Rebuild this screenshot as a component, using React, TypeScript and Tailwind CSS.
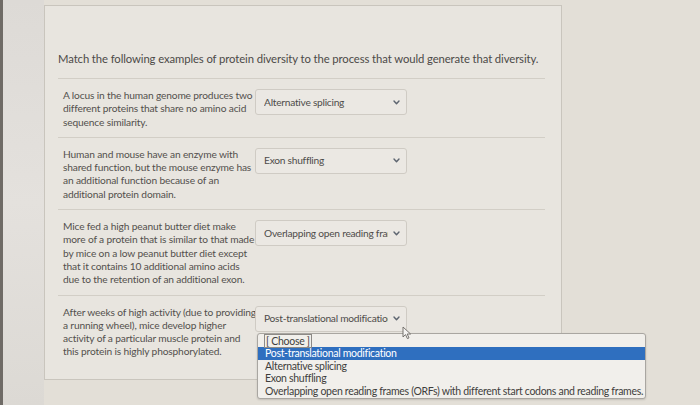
import React from "react";

const rows: { lines: string[]; value: string }[] = [
  {
    lines: [
      "A locus in the human genome produces two",
      "different proteins that share no amino acid",
      "sequence similarity.",
    ],
    value: "Alternative splicing",
  },
  {
    lines: [
      "Human and mouse have an enzyme with",
      "shared function, but the mouse enzyme has",
      "an additional function because of an",
      "additional protein domain.",
    ],
    value: "Exon shuffling",
  },
  {
    lines: [
      "Mice fed a high peanut butter diet make",
      "more of a protein that is similar to that made",
      "by mice on a low peanut butter diet except",
      "that it contains 10 additional amino acids",
      "due to the retention of an additional exon.",
    ],
    value: "Overlapping open reading frames (ORFs) with different start codons and reading frames.",
  },
  {
    lines: [
      "After weeks of high activity (due to providing",
      "a running wheel), mice develop higher",
      "activity of a particular muscle protein and",
      "this protein is highly phosphorylated.",
    ],
    value: "Post-translational modification",
  },
];

function Chevron() {
  return (
    <svg width="7" height="5" viewBox="0 0 7 5" className="shrink-0">
      <path d="M1 1 L3.5 3.8 L6 1" fill="none" stroke="#5d6570" strokeWidth="1.4" strokeLinecap="round" strokeLinejoin="round" />
    </svg>
  );
}

function SelectBox({ value }: { value: string }) {
  return (
    <div className="flex h-[26px] w-[152px] shrink-0 items-center rounded-[3px] border border-[#cfcbc4] bg-[#ebe8e3] pl-[8px] pr-[5px]">
      <span className="min-w-0 flex-1 overflow-hidden whitespace-nowrap text-[10.2px] leading-[13px] tracking-[-0.25px] text-[#4e4c4a]">
        {value}
      </span>
      <span className="ml-[3px] flex w-[10px] justify-center">
        <Chevron />
      </span>
    </div>
  );
}

export default function App() {
  return (
    <div
      className="relative flex h-[405px] w-[700px] overflow-hidden bg-[#e3dfd7]"
      style={{ fontFamily: "Lato, 'Open Sans', sans-serif" }}
    >
      <div className="w-[3px] shrink-0 bg-[#6f6b66]" />
      <div className="w-[41px] shrink-0 bg-gradient-to-b from-[#dddad6] via-[#e4e1dd] to-[#dcd9d4]" />
      <div className="mt-[5px] h-[375px] w-[518px] shrink-0 border border-[#c9c5bd] bg-[#e8e5df] pl-[13px] pr-[16px] pt-[46px]">
        <p className="whitespace-nowrap text-[11.3px] leading-[14px] tracking-[-0.1px] text-[#4c4a48]">
          Match the following examples of protein diversity to the process that would generate that diversity.
        </p>
        <div className="mt-[12px]">
          {rows.map((r, i) => (
            <div key={i} className="border-t border-[#d2cec6] pb-[8px] pt-[10px]">
              <div className="flex items-start">
                <div className="w-[197px] shrink-0 pl-[5px] text-[10.2px] leading-[13.3px] tracking-[-0.15px] text-[#53504d]">
                  {r.lines.map((l, j) => (
                    <div key={j} className="whitespace-nowrap">
                      {l}
                    </div>
                  ))}
                </div>
                <SelectBox value={r.value} />
              </div>
            </div>
          ))}
        </div>
      </div>

      {/* open native dropdown list */}
      <div className="absolute left-[257px] top-[333px] w-[389px] rounded-[3px] border border-[#a9a6a1] bg-[#f1efeb] pb-[1px] pt-[1px] text-[10.5px] leading-[12.4px] tracking-[-0.3px] text-[#3f3e3c] shadow-[0_1px_2px_rgba(0,0,0,0.15)]">
        <div className="pl-[6px]">
          <span className="border border-[#8d8a86] px-[1px]">[ Choose ]</span>
        </div>
        <div className="bg-[#2f6fbf] pl-[7px] text-white">Post-translational modification</div>
        <div className="pl-[7px]">Alternative splicing</div>
        <div className="pl-[7px]">Exon shuffling</div>
        <div className="whitespace-nowrap pl-[7px]">
          Overlapping open reading frames (ORFs) with different start codons and reading frames.
        </div>
      </div>

      {/* mouse cursor */}
      <svg className="absolute left-[402px] top-[326px]" width="10" height="14" viewBox="0 0 10 14">
        <path d="M1 1 L1 11 L3.5 8.6 L5.4 12.6 L7 11.9 L5.2 8 L8.6 8 Z" fill="#f4f3f1" stroke="#6a6762" strokeWidth="0.9" strokeLinejoin="round" />
      </svg>
    </div>
  );
}
